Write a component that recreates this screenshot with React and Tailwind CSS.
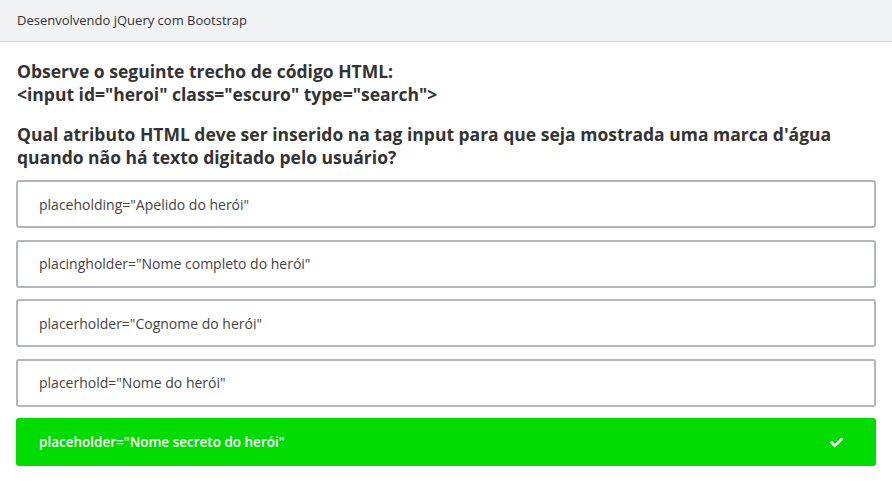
import React from "react";
import { FaCheck } from "react-icons/fa";

const options = [
  'placeholding="Apelido do herói"',
  'placingholder="Nome completo do herói"',
  'placerholder="Cognome do herói"',
  'placerhold="Nome do herói"',
];

export default function App() {
  return (
    <div className="w-[892px] h-[490px] bg-white" style={{ fontFamily: '"Open Sans", sans-serif' }}>
      <div className="h-[42px] bg-[#f1f2f4] border-b border-[#cfd1d3] flex items-center px-[17px] text-[13px] text-[#333]">
        Desenvolvendo jQuery com Bootstrap
      </div>
      <div className="px-[16px] pt-[18px]">
        <div className="px-[1px] text-[17.5px] leading-[23px] font-bold text-[#333]">
          <p>Observe o seguinte trecho de código HTML:</p>
          <p>&lt;input id="heroi" class="escuro" type="search"&gt;</p>
          <p className="mt-[17px]">Qual atributo HTML deve ser inserido na tag input para que seja mostrada uma marca d'água quando não há texto digitado pelo usuário?</p>
        </div>
        <div className="mt-[11px] flex flex-col gap-[11.5px] w-[860px]">
          {options.map((o) => (
            <div key={o} className="h-[48px] border-2 border-[#b3b7ba] rounded-[3px] flex items-center px-[21px] text-[14px] text-[#444]">
              {o}
            </div>
          ))}
          <div className="h-[48px] bg-[#00dc00] rounded-[3px] flex items-center justify-between pl-[23px] pr-[33px] text-[13.5px] font-semibold text-white">
            <span>placeholder="Nome secreto do herói"</span>
            <FaCheck className="w-[13px] h-[13px]" />
          </div>
        </div>
      </div>
    </div>
  );
}
